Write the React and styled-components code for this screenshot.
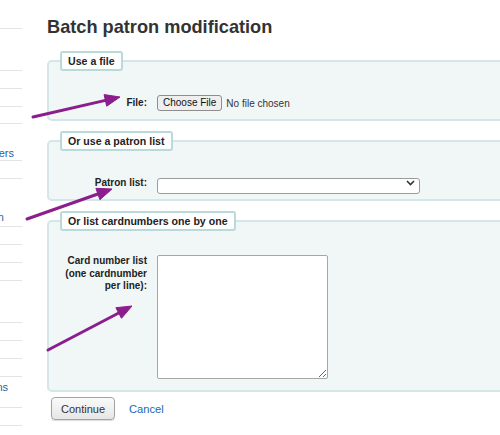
import React from "react";
import styled, { createGlobalStyle } from "styled-components";

const Global = createGlobalStyle`
  html, body { margin: 0; padding: 0; background: #fff; }
  body { overflow: hidden; font-family: "Liberation Sans", Arial, sans-serif; color: #222; }
  * { box-sizing: border-box; }
`;

const Page = styled.div`
  position: relative;
  display: flex;
  width: 500px;
  height: 435px;
  overflow: hidden;
`;

const Sidebar = styled.ul`
  flex: none;
  width: 22px;
  margin: 0;
  padding: 0;
  list-style: none;
  overflow: hidden;
`;

const SideItem = styled.li`
  height: ${(p) => p.$h}px;
  border-bottom: 1px solid #e4e4e4;
  padding: ${(p) => p.$top || 0}px ${(p) => p.$right || 0}px 0 0;
  font-size: 11px;
  line-height: 13px;
  white-space: nowrap;
  display: flex;
  justify-content: flex-end;
  align-items: flex-start;
  overflow: hidden;
`;

const SideLink = styled.a`
  color: #1f62a8;
  text-decoration: none;
`;

const Main = styled.main`
  flex: none;
  width: 470px;
  margin-left: 25px;
`;

const Title = styled.h1`
  margin: 17px 0 13px;
  font-size: 18.2px;
  line-height: 21px;
  font-weight: bold;
  color: #333;
`;

const Fieldset = styled.fieldset`
  margin: 0 0 10px;
  padding: 0;
  border: 2px solid #d3e7e8;
  border-radius: 5px;
  background: #f1f7f7;
  min-width: 0;
`;

const Legend = styled.legend`
  margin-left: 11px;
  padding: 1px 6px;
  border: 2px solid #b9d9da;
  border-radius: 3px;
  background: #fff;
  font-size: 10.6px;
  line-height: 14px;
  font-weight: bold;
  color: #222;
`;

const Body = styled.div`
  padding: 24px 0 ${(p) => p.$pb ?? 8}px;
`;

const Row = styled.div`
  display: flex;
  align-items: ${(p) => (p.$top ? "flex-start" : "center")};
  gap: 10px;
`;

const Label = styled.label`
  flex: none;
  width: 98px;
  text-align: right;
  font-size: 10px;
  line-height: 12.5px;
  font-weight: bold;
  color: #222;
`;

const FileWrap = styled.div`
  display: flex;
  align-items: center;
  height: 16px;
`;

const FileButton = styled.button`
  height: 16px;
  padding: 0 5px;
  border: 1px solid #8d8d8d;
  border-radius: 3px;
  background: #efefef;
  font-family: "Liberation Sans", Arial, sans-serif;
  font-size: 10px;
  line-height: 14px;
  color: #111;
`;

const FileStatus = styled.span`
  margin-left: 4px;
  font-size: 10px;
  color: #333;
`;

const SelectWrap = styled.div`
  position: relative;
  width: 263px;
  height: 16px;
`;

const Select = styled.select`
  appearance: none;
  width: 100%;
  height: 16px;
  padding: 0 4px;
  border: 1px solid #9c9c9c;
  border-radius: 3px;
  background: #fff;
  font-family: "Liberation Sans", Arial, sans-serif;
  font-size: 10px;
`;

const Chevron = styled.svg`
  position: absolute;
  right: 5px;
  top: 5px;
  pointer-events: none;
`;

const TextArea = styled.textarea`
  display: block;
  width: 171px;
  height: 124px;
  margin: 0;
  border: 1px solid #a6a6a6;
  border-radius: 2px;
  background: #fff;
  font-family: "Liberation Sans", Arial, sans-serif;
  font-size: 11px;
`;

const Actions = styled.div`
  display: flex;
  align-items: center;
  gap: 14px;
  margin: -5px 0 0 4px;
`;

const Button = styled.button`
  width: 64px;
  height: 23px;
  padding: 0;
  border: 1px solid #a3a3a3;
  border-radius: 4px;
  background: linear-gradient(#fafafa, #e6e6e6);
  box-shadow: 0 1px 1px rgba(0, 0, 0, 0.15);
  font-family: "Liberation Sans", Arial, sans-serif;
  font-size: 11px;
  color: #333;
`;

const CancelLink = styled.a`
  font-size: 11.2px;
  color: #2468b0;
  text-decoration: none;
`;

const Overlay = styled.svg`
  position: absolute;
  left: 0;
  top: 0;
  pointer-events: none;
`;

const sideItems = [
  { h: 29 },
  { h: 42 },
  { h: 18 },
  { h: 18 },
  { h: 17 },
  { h: 37, text: "Overdue notice/status triggers", top: 23, right: 8 },
  { h: 18 },
  { h: 48, text: "Batch patron modification", top: 32, right: 18 },
  { h: 18 },
  { h: 18 },
  { h: 18 },
  { h: 42 },
  { h: 18 },
  { h: 18 },
  { h: 18 },
  { h: 31, text: "Rotating collections", top: 4, right: 14 },
  { h: 18 },
  { h: 18 },
];

const arrows = [
  { x1: 33, y1: 117, bx: 105.4, by: 100.4, tip: [120, 97], c1: [106.7, 106.2], c2: [104.1, 94.6] },
  { x1: 27, y1: 219, bx: 97.9, by: 194, tip: [112, 189], c1: [99.9, 199.7], c2: [95.9, 188.3] },
  { x1: 48, y1: 350, bx: 118.7, by: 313, tip: [132, 306], c1: [121.5, 318.3], c2: [115.9, 307.7] },
];

export default function App() {
  return (
    <>
      <Global />
      <Page>
        <Sidebar>
          {sideItems.map((it, i) => (
            <SideItem key={i} $h={it.h} $top={it.top} $right={it.right}>
              {it.text && <SideLink href="#">{it.text}</SideLink>}
            </SideItem>
          ))}
        </Sidebar>
        <Main>
          <Title>Batch patron modification</Title>
          <Fieldset>
            <Legend>Use a file</Legend>
            <Body>
              <Row>
                <Label>File:</Label>
                <FileWrap>
                  <FileButton type="button">Choose File</FileButton>
                  <FileStatus>No file chosen</FileStatus>
                </FileWrap>
              </Row>
            </Body>
          </Fieldset>
          <Fieldset>
            <Legend>Or use a patron list</Legend>
            <Body>
              <Row>
                <Label>Patron list:</Label>
                <SelectWrap>
                  <Select defaultValue="">
                    <option value=""></option>
                  </Select>
                  <Chevron width="9" height="6" viewBox="0 0 9 6">
                    <path d="M1 1 L4.5 4.5 L8 1" fill="none" stroke="#333" strokeWidth="1.6" />
                  </Chevron>
                </SelectWrap>
              </Row>
            </Body>
          </Fieldset>
          <Fieldset>
            <Legend>Or list cardnumbers one by one</Legend>
            <Body $pb={11}>
              <Row $top>
                <Label>
                  Card number list
                  <br />
                  (one cardnumber
                  <br />
                  per line):
                </Label>
                <TextArea />
              </Row>
            </Body>
          </Fieldset>
          <Actions>
            <Button type="button">Continue</Button>
            <CancelLink href="#">Cancel</CancelLink>
          </Actions>
        </Main>
        <Overlay width="500" height="435" viewBox="0 0 500 435">
          {arrows.map((a, i) => (
            <g key={i} fill="#8b1d8c" stroke="#8b1d8c">
              <line x1={a.x1} y1={a.y1} x2={a.bx} y2={a.by} strokeWidth="3" strokeLinecap="round" />
              <polygon points={`${a.tip.join(",")} ${a.c1.join(",")} ${a.c2.join(",")}`} strokeWidth="1" strokeLinejoin="round" />
            </g>
          ))}
        </Overlay>
      </Page>
    </>
  );
}
